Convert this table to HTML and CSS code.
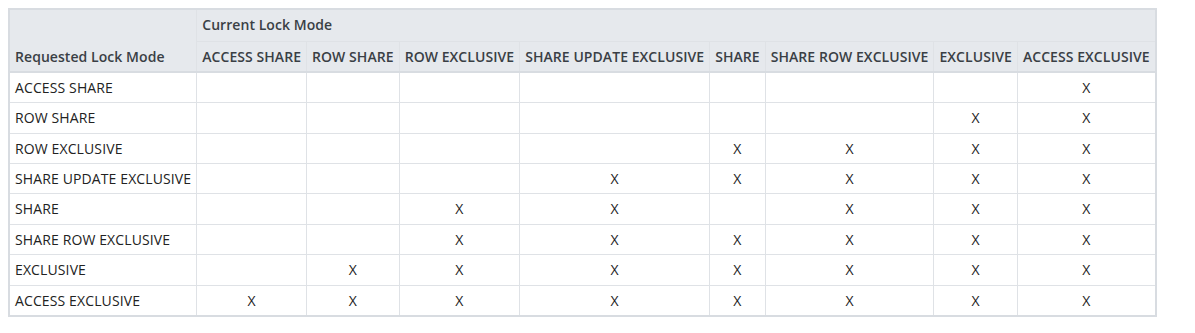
FILE: index.html
```html
<!DOCTYPE html>
<html>
<head>
<meta charset="utf-8">
<link rel="stylesheet" href="styles.css">
</head>
<body>
<table class="lock-table">
  <thead>
    <tr class="group-row">
      <th class="req" rowspan="2">Requested Lock Mode</th>
      <th class="cur" colspan="8">Current Lock Mode</th>
    </tr>
    <tr class="mode-row">
      <th>ACCESS SHARE</th>
      <th>ROW SHARE</th>
      <th>ROW EXCLUSIVE</th>
      <th>SHARE UPDATE EXCLUSIVE</th>
      <th>SHARE</th>
      <th>SHARE ROW EXCLUSIVE</th>
      <th>EXCLUSIVE</th>
      <th>ACCESS EXCLUSIVE</th>
    </tr>
  </thead>
  <tbody>
    <tr><td>ACCESS SHARE</td><td></td><td></td><td></td><td></td><td></td><td></td><td></td><td>X</td></tr>
    <tr><td>ROW SHARE</td><td></td><td></td><td></td><td></td><td></td><td></td><td>X</td><td>X</td></tr>
    <tr><td>ROW EXCLUSIVE</td><td></td><td></td><td></td><td></td><td>X</td><td>X</td><td>X</td><td>X</td></tr>
    <tr><td>SHARE UPDATE EXCLUSIVE</td><td></td><td></td><td></td><td>X</td><td>X</td><td>X</td><td>X</td><td>X</td></tr>
    <tr><td>SHARE</td><td></td><td></td><td>X</td><td>X</td><td></td><td>X</td><td>X</td><td>X</td></tr>
    <tr><td>SHARE ROW EXCLUSIVE</td><td></td><td></td><td>X</td><td>X</td><td>X</td><td>X</td><td>X</td><td>X</td></tr>
    <tr><td>EXCLUSIVE</td><td></td><td>X</td><td>X</td><td>X</td><td>X</td><td>X</td><td>X</td><td>X</td></tr>
    <tr><td>ACCESS EXCLUSIVE</td><td>X</td><td>X</td><td>X</td><td>X</td><td>X</td><td>X</td><td>X</td><td>X</td></tr>
  </tbody>
</table>
</body>
</html>
```

FILE: styles.css
```css
body {
  margin: 8px;
  background: #ffffff;
  font-family: "Open Sans", "Liberation Sans", sans-serif;
  color: #222;
}

.lock-table {
  border-collapse: collapse;
  border: 2px solid #d8dce1;
  font-size: 14px;
  line-height: 19.4px;
}

.lock-table th,
.lock-table td {
  border: 1px solid #dfe2e6;
  padding: 5px 5px 5px 5px;
  white-space: nowrap;
}

.lock-table th {
  background: #e6e9ed;
  font-weight: 600;
  color: #3a3f45;
  text-align: left;
  letter-spacing: 0.06px;
}

.lock-table .group-row th.cur {
  padding-bottom: 7px;
}

.lock-table .mode-row th {
  padding-bottom: 4px;
}

.lock-table .mode-row th,
.lock-table th.req {
  border-bottom: 2px solid #d8dce1;
}

.lock-table th.req {
  vertical-align: bottom;
  padding-bottom: 4px;
}

.lock-table td {
  text-align: center;
  color: #222;
  letter-spacing: 0.12px;
}

.lock-table td:first-child {
  text-align: left;
}
```
